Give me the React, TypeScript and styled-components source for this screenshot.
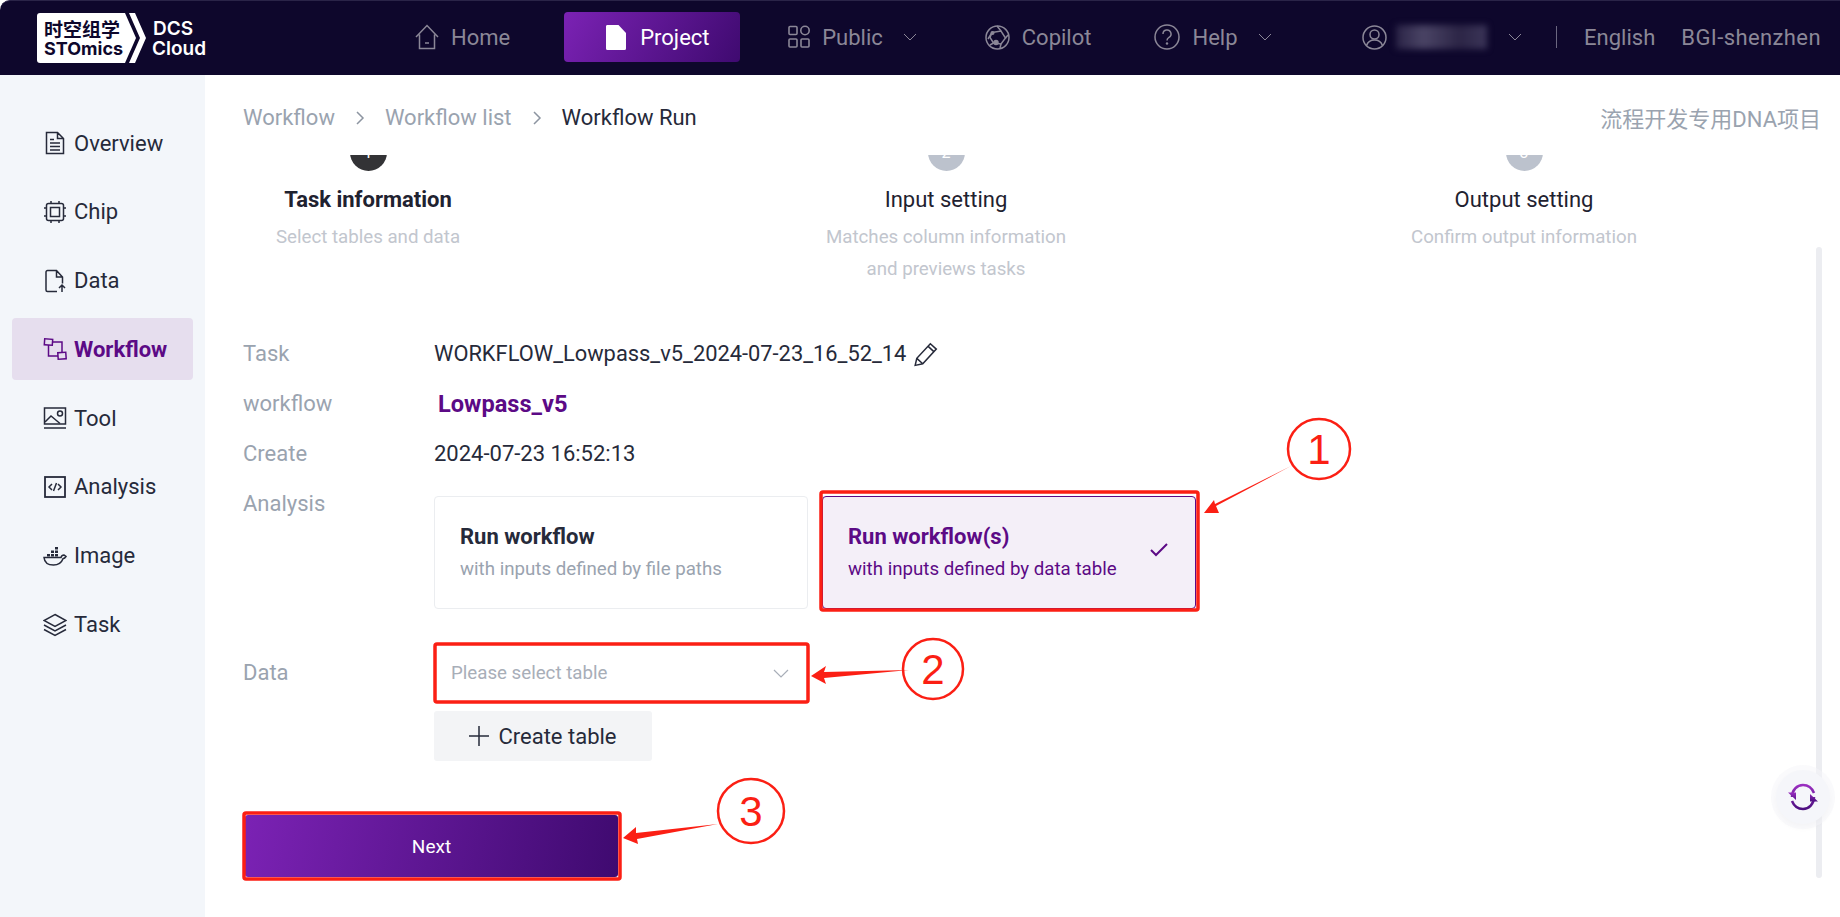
import React from 'react';
import styled, { createGlobalStyle } from 'styled-components';

const Global = createGlobalStyle`
  html, body { margin: 0; padding: 0; background: #fff; }
  body { font-family: Roboto, "Noto Sans CJK SC", sans-serif; width: 1840px; height: 917px; overflow: hidden; }
  * { box-sizing: border-box; }
`;

const Page = styled.div`
  position: relative;
  width: 1840px;
  height: 917px;
  display: flex;
  flex-direction: column;
  overflow: hidden;
`;

const Header = styled.header`
  flex: none;
  height: 75px;
  background: #0e072c;
  border-top: 1px solid #2a2448;
  border-top-left-radius: 10px;
  display: flex;
  align-items: center;
  padding: 0 19px 2px 37px;
  color: #8b8797;
  font-size: 22px;
`;

const LogoBox = styled.div`
  width: 180px;
  height: 50px;
  flex: none;
  margin-top: 2px;
`;

const Nav = styled.nav`
  display: flex;
  align-items: center;
  margin-left: 198px;
`;

const NavItem = styled.div<{ $ml?: number }>`
  display: flex;
  align-items: center;
  margin-left: ${p => p.$ml ?? 0}px;
  gap: 12px;
  white-space: nowrap;
`;

const NavActive = styled.div`
  display: flex;
  align-items: center;
  gap: 14px;
  width: 176px;
  height: 50px;
  padding-left: 42px;
  margin-left: 54px;
  border-radius: 4px;
  color: #fff;
  background: linear-gradient(120deg, #7b22b4 0%, #3f0a70 100%);
`;

const Chevron = styled.svg`
  width: 14px;
  height: 8px;
  margin-left: 8px;
  fill: none;
  stroke: #8b8797;
  stroke-width: 1;
`;

const UserArea = styled.div`
  margin-left: auto;
  display: flex;
  align-items: center;
  white-space: nowrap;
`;

const Blur = styled.div`
  width: 91px;
  height: 24px;
  margin: 0 13px 0 9px;
  background: linear-gradient(90deg, #2a2346, #4a4465 30%, #2c2546 70%, #3b3558);
  filter: blur(3px);
`;

const Divider = styled.div`
  width: 1px;
  height: 22px;
  background: #6b6780;
  margin: 0 27px 0 34px;
`;

const HeaderLink = styled.span<{ $ml?: number; $wide?: boolean }>`
  margin-left: ${p => p.$ml ?? 0}px;
  letter-spacing: ${p => (p.$wide ? '0.4px' : 'normal')};
`;

const Body = styled.div`
  flex: 1;
  display: flex;
  min-height: 0;
`;

const Sidebar = styled.aside`
  flex: none;
  width: 205px;
  background: #f3f6fa;
  padding: 37px 12px 0;
  display: flex;
  flex-direction: column;
  gap: 6.8px;
`;

const SideItem = styled.div<{ $active?: boolean }>`
  height: 62px;
  width: 181px;
  flex: none;
  border-radius: 4px;
  display: flex;
  align-items: center;
  gap: 7px;
  padding-left: 31px;
  font-size: 22px;
  font-weight: ${p => (p.$active ? 700 : 400)};
  color: ${p => (p.$active ? '#5c0a86' : '#262a3a')};
  background: ${p => (p.$active ? '#e6deee' : 'transparent')};
  svg { flex: none; width: 24px; height: 24px; fill: none; stroke: currentColor; stroke-width: 1.5; }
`;

const Main = styled.main`
  flex: 1;
  position: relative;
  display: flex;
  flex-direction: column;
  min-width: 0;
`;

const TopBar = styled.div`
  flex: none;
  height: 80px;
  padding: 0 19px 0 38px;
  display: flex;
  align-items: center;
  justify-content: space-between;
  font-size: 22px;
  background: #fff;
  position: relative;
  z-index: 1;
`;

const Crumbs = styled.div`
  display: flex;
  align-items: center;
  color: #9aa3af;
  gap: 20px;
  margin-top: 5px;
`;

const CrumbCurrent = styled.span`
  color: #262a3a;
`;

const CrumbSep = styled.svg`
  width: 10px;
  height: 14px;
  fill: none;
  stroke: #8d95a1;
  stroke-width: 1.5;
`;

const ProjectName = styled.div`
  color: #9aa3af;
  margin-top: 3px;
`;

const Content = styled.div`
  flex: 1;
  padding: 0 0 0 38px;
  position: relative;
`;

const Steps = styled.div`
  display: grid;
  grid-template-columns: repeat(3, 250px);
  column-gap: 328px;
  margin-top: -21px;
`;

const Step = styled.div`
  display: flex;
  flex-direction: column;
  align-items: center;
  text-align: center;
`;

const StepDot = styled.div<{ $on?: boolean }>`
  width: 37px;
  height: 37px;
  border-radius: 50%;
  color: #fff;
  font-size: 16px;
  line-height: 37px;
  background: ${p => (p.$on ? '#333336' : '#bcc2cd')};
`;

const StepTitle = styled.div<{ $on?: boolean }>`
  margin-top: 13px;
  line-height: 32px;
  font-size: 22px;
  font-weight: ${p => (p.$on ? 700 : 400)};
  color: #1f2230;
  white-space: nowrap;
`;

const StepDesc = styled.div`
  margin-top: 5px;
  font-size: 18.7px;
  line-height: 32px;
  color: #c2c6ce;
  white-space: nowrap;
`;

const Form = styled.div`
  margin-top: 56px;
  display: grid;
  grid-template-columns: 191px 1fr;
  align-items: start;
  font-size: 22px;
`;

const Label = styled.div<{ $h: number }>`
  color: #9aa3af;
  height: ${p => p.$h}px;
  line-height: 26px;
`;

const Value = styled.div<{ $h: number }>`
  height: ${p => p.$h}px;
  line-height: 26px;
  color: #262a3a;
  display: flex;
  align-items: flex-start;
  gap: 7px;
`;

const TaskName = styled.span`
  font-size: 21.85px;
`;

const WorkflowName = styled.span`
  color: #5c0a86;
  font-size: 23.6px;
  font-weight: 700;
  margin-left: 4px;
`;

const Cards = styled.div`
  display: flex;
  gap: 14px;
  margin-top: 5px;
`;

const Card = styled.div<{ $on?: boolean }>`
  position: relative;
  width: 374px;
  height: 113px;
  border-radius: 4px;
  border: 1px solid ${p => (p.$on ? '#5c0a86' : '#ebedf0')};
  background: ${p => (p.$on ? '#f4eff8' : '#fff')};
  color: ${p => (p.$on ? '#5c0a86' : '#262a3a')};
  padding: 26px 25px;
`;

const CardTitle = styled.div`
  font-size: 22px;
  font-weight: 700;
  line-height: 28px;
`;

const CardSub = styled.div<{ $on?: boolean }>`
  margin-top: 4px;
  font-size: 18.7px;
  line-height: 28px;
  color: ${p => (p.$on ? '#5c0a86' : '#9aa3af')};
`;

const CardCheck = styled.svg`
  position: absolute;
  right: 27px;
  top: 46px;
  width: 18px;
  height: 14px;
  fill: none;
  stroke: #5c0a86;
  stroke-width: 2;
`;

const DataCol = styled.div`
  display: flex;
  flex-direction: column;
  gap: 8px;
  align-items: flex-start;
`;

const Select = styled.div`
  width: 374px;
  height: 60px;
  display: flex;
  align-items: center;
  justify-content: space-between;
  padding: 0 19px 0 17px;
  font-size: 18.7px;
  color: #a8aeb8;
  background: #fff;
  margin-top: -17px;
`;

const CreateButton = styled.div`
  width: 218px;
  height: 50px;
  display: flex;
  align-items: center;
  justify-content: center;
  gap: 9px;
  border-radius: 3px;
  background: #f3f4f6;
  color: #262a3a;
  font-size: 22px;
  svg { width: 20px; height: 20px; stroke: #262a3a; stroke-width: 1.5; fill: none; }
`;

const NextButton = styled.div`
  margin-top: 54px;
  width: 373px;
  height: 62px;
  margin-left: 2px;
  border-radius: 3px;
  display: flex;
  align-items: center;
  justify-content: center;
  color: #fff;
  font-size: 19px;
  background: linear-gradient(100deg, #7b22b4 0%, #3f0a70 100%);
`;

const ScrollTrack = styled.div`
  position: absolute;
  left: 1611px;
  top: 172px;
  width: 6px;
  height: 631px;
  border-radius: 3px;
  background: #ecedf1;
`;

const FloatButton = styled.div`
  position: absolute;
  left: 1571px;
  top: 695px;
  width: 54px;
  height: 54px;
  border-radius: 50%;
  background: #f5f6fa;
  box-shadow: 0 0 0 5px rgba(245,246,250,.5), 0 3px 6px rgba(0,0,0,.06);
  display: flex;
  align-items: center;
  justify-content: center;
`;

const Annotations = styled.svg`
  position: absolute;
  inset: 0;
  width: 1840px;
  height: 917px;
  pointer-events: none;
  z-index: 5;
  fill: none;
  stroke: #fb1f14;
  font-family: "Liberation Sans", sans-serif;
`;

const AnnotationBox = styled.rect`
  stroke-width: 3.5;
`;

const AnnotationNumber = styled.text`
  fill: #fb1f14;
  stroke: none;
  font-size: 42px;
  text-anchor: middle;
`;

const Ic = {
  home: (
    <svg width="24" height="26" viewBox="0 0 24 26" fill="none" stroke="#8b8797" strokeWidth="1.5">
      <path d="M1 13 12 1.5 23 13M4.5 10.5V24.5h15V10.5M10 19h4" />
    </svg>
  ),
  doc: (
    <svg width="20" height="25" viewBox="0 0 20 25" fill="#fff">
      <path d="M2 0h10.5L20 8v15.5a1.5 1.5 0 0 1-1.5 1.5h-17A1.5 1.5 0 0 1 0 23.5v-22A1.5 1.5 0 0 1 2 0Z" />
    </svg>
  ),
  grid: (
    <svg width="22" height="24" viewBox="0 0 22 24" fill="none" stroke="#8b8797" strokeWidth="1.6">
      <rect x="1" y="1.5" width="8" height="8" rx="1" />
      <circle cx="17" cy="5.5" r="4.2" />
      <rect x="1" y="14" width="8" height="8" rx="1" />
      <rect x="13" y="14" width="8" height="8" rx="1" />
    </svg>
  ),
  copilot: (
    <svg width="25" height="25" viewBox="0 0 25 25" fill="none" stroke="#8b8797" strokeWidth="1.5">
      <circle cx="12.5" cy="12.5" r="11.5" />
      <path d="M7 7.5 16 6l4.5 7-4.5 6-7.5-1L5 12.5Z" />
      <path d="M7 7.5 3 14M16 6l-4-5M20.5 13l2.5-3M16 19l-1 4M8.5 18 5 20" />
      <circle cx="11" cy="17.5" r="2" fill="#8b8797" />
      <circle cx="7.5" cy="8" r="1.3" fill="#8b8797" />
    </svg>
  ),
  help: (
    <svg width="26" height="26" viewBox="0 0 26 26" fill="none" stroke="#8b8797" strokeWidth="1.5">
      <circle cx="13" cy="13" r="12" />
      <path d="M9 10a4 4 0 1 1 6 3.4c-1.3.8-2 1.4-2 3" />
      <circle cx="13" cy="19.5" r="1.2" fill="#8b8797" stroke="none" />
    </svg>
  ),
  user: (
    <svg width="25" height="25" viewBox="0 0 25 25" fill="none" stroke="#8b8797" strokeWidth="1.5">
      <circle cx="12.5" cy="12.5" r="11.5" />
      <circle cx="12.5" cy="9.5" r="4.5" />
      <path d="M4.5 20.5c1.5-4 4.5-5.5 8-5.5s6.5 1.5 8 5.5" />
    </svg>
  ),
  overview: (
    <svg viewBox="0 0 24 24">
      <path d="M3.5 1.5h11l6 6v15h-17ZM14.5 1.5v6h6M7 12h10M7 15.5h10M7 19h10M7 8.5h4" />
    </svg>
  ),
  chip: (
    <svg viewBox="0 0 24 24">
      <rect x="3.5" y="3.5" width="17" height="17" rx="2" />
      <rect x="7.5" y="7.5" width="9" height="9" />
      <path d="M8 1v2.5M16 1v2.5M8 20.5V23M16 20.5V23M1 8h2.5M1 16h2.5M20.5 8H23M20.5 16H23" />
    </svg>
  ),
  data: (
    <svg viewBox="0 0 24 24">
      <path d="M14 22.5H4.5A1.5 1.5 0 0 1 3 21V3a1.5 1.5 0 0 1 1.5-1.500h9l6 6.500v6.500M13.500 1.500V8h6M19 23v-7M16 19l3-3 3 3" />
    </svg>
  ),
  workflow: (
    <svg viewBox="0 0 24 24">
      <rect x="1.5" y="2" width="8" height="6" transform="rotate(4 5 5)" />
      <rect x="15" y="15.5" width="8" height="6.5" transform="rotate(-4 19 19)" />
      <path d="M9.5 5H19v10M5.500 8v11H15" />
    </svg>
  ),
  tool: (
    <svg viewBox="0 0 24 24">
      <rect x="1.5" y="2" width="21" height="16" />
      <path d="M1 22h22M2 16l6-6 9 7.5" />
      <circle cx="17" cy="7.5" r="2.5" />
    </svg>
  ),
  analysis: (
    <svg viewBox="0 0 24 24">
      <rect x="2" y="2" width="20" height="20" strokeWidth="1.8" />
      <path d="M9 9l-3 3 3 3M15 9l3 3-3 3M13.5 8l-3 8" />
    </svg>
  ),
  image: (
    <svg viewBox="0 0 24 24">
      <path d="M1 13.5h17c.5-2 1.5-2.500 3-2.500l2 1.500c-1 1.500-2 2-3 2.200-1.500 4-5 6.300-9.500 6.300C5 21 1.500 18.500 1 13.500Z" />
      <path fill="currentColor" stroke="none" d="M4 10h3v2.500H4zM8 10h3v2.500H8zM12 10h3v2.500h-3zM8 6.500h3V9H8zM12 6.500h3V9h-3zM12 3h3v2.500h-3z" />
    </svg>
  ),
  task: (
    <svg viewBox="0 0 24 24">
      <path d="M12 1.500 23 7.500 12 13.500 1 7.500ZM1 12l11 6 11-6M1 16.500l11 6 11-6" />
    </svg>
  ),
};

const sideItems: [string, React.ReactNode][] = [
  ['Overview', Ic.overview],
  ['Chip', Ic.chip],
  ['Data', Ic.data],
  ['Workflow', Ic.workflow],
  ['Tool', Ic.tool],
  ['Analysis', Ic.analysis],
  ['Image', Ic.image],
  ['Task', Ic.task],
];

const Down = () => (
  <Chevron viewBox="0 0 14 8">
    <path d="M1 1l6 6 6-6" />
  </Chevron>
);

const Logo = () => (
  <LogoBox>
    <svg width="180" height="50" viewBox="0 0 180 50">
      <path d="M3 0h85l11 25-11 25H3a3 3 0 0 1-3-3V3a3 3 0 0 1 3-3Z" fill="#fff" />
      <path d="M92 0h6l11 25-11 25h-6l11-25Z" fill="#fff" />
      <text x="7" y="24" fontSize="19" fontWeight="700" fill="#0e072c" fontFamily="'Noto Sans CJK SC', sans-serif">时空组学</text>
      <text x="7" y="42" fontSize="18" fontWeight="700" fill="#0e072c" fontFamily="Inter, sans-serif">STOmics</text>
      <text x="116" y="22" fontSize="19" fontWeight="600" fill="#fff" fontFamily="Inter, sans-serif">DCS</text>
      <text x="115" y="42" fontSize="19" fontWeight="600" fill="#fff" fontFamily="Inter, sans-serif">Cloud</text>
    </svg>
  </LogoBox>
);

export default function App() {
  return (
    <Page>
      <Global />
      <Header>
        <Logo />
        <Nav>
          <NavItem>{Ic.home}<span>Home</span></NavItem>
          <NavActive>{Ic.doc}<span>Project</span></NavActive>
          <NavItem $ml={48}>{Ic.grid}<span>Public</span><Down /></NavItem>
          <NavItem $ml={68}>{Ic.copilot}<span>Copilot</span></NavItem>
          <NavItem $ml={63}>{Ic.help}<span>Help</span><Down /></NavItem>
        </Nav>
        <UserArea>
          {Ic.user}
          <Blur />
          <Down />
          <Divider />
          <HeaderLink>English</HeaderLink>
          <HeaderLink $ml={26} $wide>BGI-shenzhen</HeaderLink>
        </UserArea>
      </Header>
      <Body>
        <Sidebar>
          {sideItems.map(([name, icon]) => (
            <SideItem key={name} $active={name === 'Workflow'}>
              {icon}
              <span>{name}</span>
            </SideItem>
          ))}
        </Sidebar>
        <Main>
          <TopBar>
            <Crumbs>
              <span>Workflow</span>
              <CrumbSep viewBox="0 0 10 14"><path d="M2 1l6 6-6 6" /></CrumbSep>
              <span>Workflow list</span>
              <CrumbSep viewBox="0 0 10 14"><path d="M2 1l6 6-6 6" /></CrumbSep>
              <CrumbCurrent>Workflow Run</CrumbCurrent>
            </Crumbs>
            <ProjectName>流程开发专用DNA项目</ProjectName>
          </TopBar>
          <Content>
            <Steps>
              <Step>
                <StepDot $on>1</StepDot>
                <StepTitle $on>Task information</StepTitle>
                <StepDesc>Select tables and data</StepDesc>
              </Step>
              <Step>
                <StepDot>2</StepDot>
                <StepTitle>Input setting</StepTitle>
                <StepDesc>Matches column information<br />and previews tasks</StepDesc>
              </Step>
              <Step>
                <StepDot>3</StepDot>
                <StepTitle>Output setting</StepTitle>
                <StepDesc>Confirm output information</StepDesc>
              </Step>
            </Steps>
            <Form>
              <Label $h={50}>Task</Label>
              <Value $h={50}>
                <TaskName>WORKFLOW_Lowpass_v5_2024-07-23_16_52_14</TaskName>
                <svg width="26" height="26" viewBox="0 0 24 24" fill="none" stroke="#262a3a" strokeWidth="1.4">
                  <path d="M2 22.5 3.5 16 16 2.500l5.500 5L9 21ZM3.500 16 9 21M14 5l5.500 5" />
                </svg>
              </Value>
              <Label $h={50}>workflow</Label>
              <Value $h={50}><WorkflowName>Lowpass_v5</WorkflowName></Value>
              <Label $h={50}>Create</Label>
              <Value $h={50}>2024-07-23 16:52:13</Value>
              <Label $h={169}>Analysis</Label>
              <Value $h={169}>
                <Cards>
                  <Card>
                    <CardTitle>Run workflow</CardTitle>
                    <CardSub>with inputs defined by file paths</CardSub>
                  </Card>
                  <Card $on>
                    <CardTitle>Run workflow(s)</CardTitle>
                    <CardSub $on>with inputs defined by data table</CardSub>
                    <CardCheck viewBox="0 0 18 14"><path d="M1 7l5 5L17 1" /></CardCheck>
                  </Card>
                </Cards>
              </Value>
              <Label $h={26}>Data</Label>
              <DataCol>
                <Select>
                  <span>Please select table</span>
                  <svg width="16" height="9" viewBox="0 0 16 9" fill="none" stroke="#a8aeb8" strokeWidth="1.2"><path d="M1 1l7 7 7-7" /></svg>
                </Select>
                <CreateButton>
                  <svg viewBox="0 0 20 20"><path d="M10 0v20M0 10h20" /></svg>
                  <span>Create table</span>
                </CreateButton>
              </DataCol>
            </Form>
            <NextButton>Next</NextButton>
          </Content>
          <ScrollTrack />
          <FloatButton>
            <svg width="30" height="28" viewBox="0 0 30 28">
              <defs>
                <linearGradient id="sync" x1="0" y1="0" x2="0" y2="1">
                  <stop offset="0" stopColor="#9a2fc0" />
                  <stop offset="1" stopColor="#4d0f80" />
                </linearGradient>
              </defs>
              <path fill="none" stroke="url(#sync)" strokeWidth="2.5" d="M4 14C4 7 9 2 15 2c5 0 9 3 11 8M26 14c0 7-5 12-11 12-5 0-9-3-11-8" />
              <path fill="url(#sync)" d="M0 9.5 8 17V9.5ZM30 18.5 22 11v7.5Z" />
            </svg>
          </FloatButton>
        </Main>
      </Body>
      <Annotations viewBox="0 0 1840 917">
        <AnnotationBox x="821" y="492" width="377" height="118" rx="2" />
        <AnnotationBox x="435" y="644" width="373" height="58" rx="2" />
        <AnnotationBox x="244" y="813" width="376" height="66" rx="2" />
        <g strokeWidth="2.5">
          <ellipse cx="1319" cy="449" rx="31" ry="30" />
          <ellipse cx="933" cy="669" rx="30" ry="30" />
          <ellipse cx="751" cy="811" rx="33" ry="32" />
        </g>
        <AnnotationNumber x="1319" y="464">1</AnnotationNumber>
        <AnnotationNumber x="933" y="684">2</AnnotationNumber>
        <AnnotationNumber x="751" y="826">3</AnnotationNumber>
        <g fill="#fb1f14" stroke="none">
          <path d="M1291 466 1216 506 1219 513 1204 513 1214 500 1215 504Z" />
          <path d="M909 670 824 672 826 666 811 676 826 684 824 678Z" />
          <path d="M718 824 636 833 636 827 623 838 638 844 637 839Z" />
        </g>
      </Annotations>
    </Page>
  );
}
